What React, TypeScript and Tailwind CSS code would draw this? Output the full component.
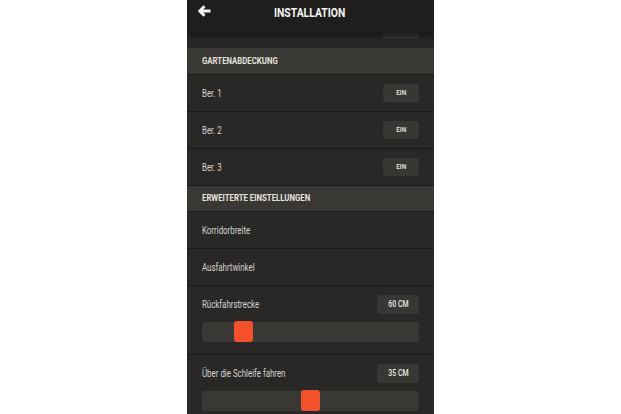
import React from "react";

const font = { fontFamily: "Roboto, 'Liberation Sans', sans-serif" };

// the screenshot is squeezed horizontally, so text is narrowed with scale-x
const Label: React.FC<{ text: string }> = ({ text }) => (
    <span className="inline-block origin-left scale-x-[0.79] whitespace-nowrap text-[10px] text-[#d4d2ce]">{text}</span>
);

const Pill: React.FC<{ text?: string }> = ({ text }) => (
    <div className="flex h-[18px] w-[36px] items-center justify-center rounded-[3px] bg-[#393734]">
        {text && (
            <span className="inline-block scale-x-[0.8] text-[8px] font-medium text-[#eceae6]">{text}</span>
        )}
    </div>
);

const Row: React.FC<{ label: string; children?: React.ReactNode }> = ({ label, children }) => (
    <div className="flex h-[37px] items-center justify-between border-b border-[#1c1b19] px-[15px]">
        <Label text={label} />
        {children}
    </div>
);

const Section: React.FC<{ title: string; h: string }> = ({ title, h }) => (
    <div className={`${h} flex items-center border-b border-[#1c1b19] bg-[#3a3835] pl-[15px]`}>
        <span className="inline-block origin-left scale-x-[0.82] whitespace-nowrap text-[9.5px] font-bold text-[#e4e2de]">{title}</span>
    </div>
);

const SliderRow: React.FC<{ label: string; value: string; pos: number }> = ({ label, value, pos }) => (
    <div className="h-[69px] border-b border-[#1c1b19] px-[15px] pt-[9px]">
        <div className="flex items-center justify-between">
            <Label text={label} />
            <div className="flex h-[19px] w-[42px] items-center justify-center rounded-[3px] bg-[#393734]">
                <span className="inline-block scale-x-[0.82] whitespace-nowrap text-[8.5px] font-medium text-[#eceae6]">{value}</span>
            </div>
        </div>
        <div className="relative mt-[8px] h-[20px] rounded-[3px] bg-[#3a3835]">
            <div
                className="absolute top-[-1px] h-[21px] w-[19px] rounded-[3px] bg-[#f2512a]"
                style={{ left: pos }}
            />
        </div>
    </div>
);

export default function App() {
    return (
        <div className="flex h-[414px] w-full justify-center bg-white" style={font}>
            <div className="flex h-full w-[247px] flex-col overflow-hidden bg-[#2a2826]">
                <div className="relative z-10 flex h-[33px] shrink-0 items-start bg-[#1f1e1c] pt-[4px] shadow-[0_3px_8px_rgba(0,0,0,0.55)]">
                    <svg className="ml-[11px] mt-[1px]" width="13" height="12" viewBox="0 0 13 12">
                        <path d="M6.5 1.2 L1.8 6 L6.5 10.8 M2.2 6 H12.5" stroke="#f4f4f4" strokeWidth="2.8" fill="none" />
                    </svg>
                    <span className="ml-[63px] inline-block origin-left scale-x-[0.83] whitespace-nowrap text-[12.5px] font-bold leading-[17px] text-[#f4f4f4]">
                        INSTALLATION
                    </span>
                </div>
                <div className="flex-1 overflow-hidden">
                    <div className="-mt-[22px] flex h-[37px] items-center justify-end px-[15px]">
                        <Pill />
                    </div>
                    <Section title="GARTENABDECKUNG" h="h-[27px]" />
                    <Row label="Ber. 1"><Pill text="EIN" /></Row>
                    <Row label="Ber. 2"><Pill text="EIN" /></Row>
                    <Row label="Ber. 3"><Pill text="EIN" /></Row>
                    <Section title="ERWEITERTE EINSTELLUNGEN" h="h-[26px]" />
                    <Row label="Korridorbreite" />
                    <Row label="Ausfahrtwinkel" />
                    <SliderRow label="Rückfahrstrecke" value="60 CM" pos={32} />
                    <SliderRow label="Über die Schleife fahren" value="35 CM" pos={99} />
                </div>
            </div>
        </div>
    );
}
